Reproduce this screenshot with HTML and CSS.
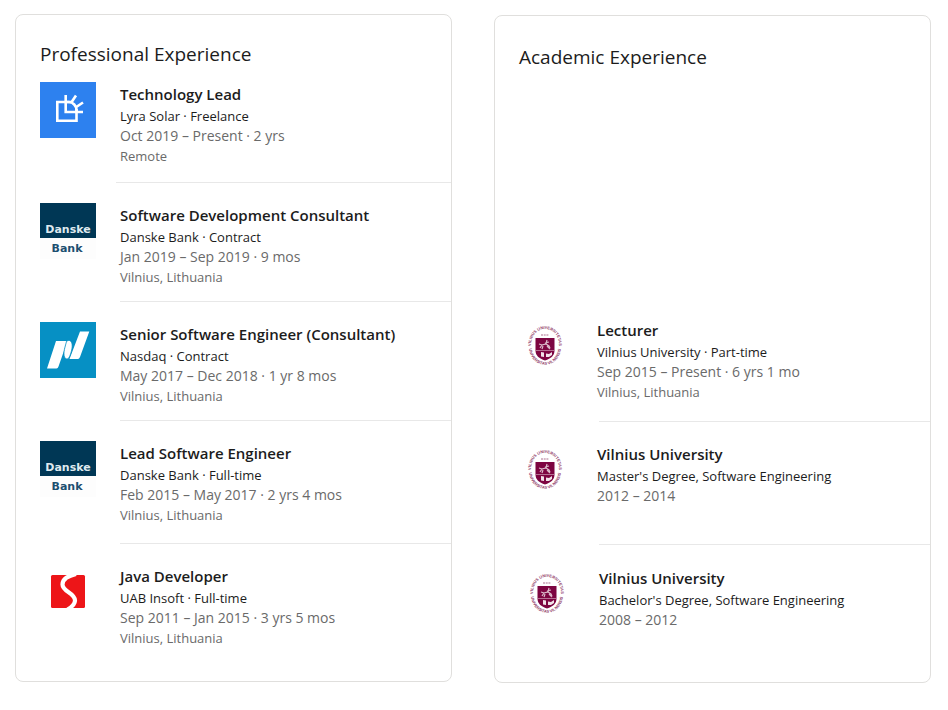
FILE: index.html
```html
<!DOCTYPE html>
<html lang="en">
<head>
<meta charset="utf-8">
<meta name="viewport" content="width=device-width, initial-scale=1">
<title>Experience</title>
<link rel="stylesheet" href="styles.css">
</head>
<body>
<svg class="defs" aria-hidden="true">
  <symbol id="danske" viewBox="0 0 56 56">
    <path fill="#fdfdfd" d="M0 0h56v56H0z"/>
    <path fill="#003755" d="M0 0h56v35H0z"/>
    <text class="danske-text" x="28" y="30" fill="#dfe9ef">Danske</text>
    <text class="danske-text" x="27" y="49" fill="#1d4f70">Bank</text>
  </symbol>
  <symbol id="vilnius" viewBox="0 0 56 56">
    <path id="ring-top" fill="none" d="M12.600 31A14 15.600 0 1 1 39.400 31"/>
    <path id="ring-bottom" fill="none" d="M10 29A16 17.800 0 0 0 42 29"/>
    <text class="ring-text"><textPath href="#ring-top" startOffset="50%">VILNIUS UNIVERSITETAS</textPath></text>
    <text class="ring-text"><textPath href="#ring-bottom" startOffset="50%">UNIVERSITAS VILNENSIS</textPath></text>
    <path stroke="#c9a0b5" stroke-width="1.4" stroke-dasharray="2 .7" d="M22 17h8"/>
    <path fill="#7d0541" d="M16.500 20h19v12.500c0 5-3.500 8-9.500 10-6-2-9.500-5-9.500-10z"/>
    <path stroke="#c48aa6" stroke-width=".8" d="M16.500 32.500h19"/>
    <path fill="none" stroke="#dcbccb" stroke-width="1.200" d="M21 30l2-3 4-1 3 2 1 2M23 27l-3-1M27 26l1-4M30 24l-4 1M24 28l-1 3M28 28l3 3"/>
    <path fill="#f1e2e9" d="M22 34l3 .5v4.500l-3-.5zM27 35.500l3 .5 3-2v3l-3 2h-3z"/>
  </symbol>
</svg>
<main class="page">
  <section class="card">
    <h2 class="card__title">Professional Experience</h2>
    <ul class="list">
      <li class="entry entry--first">
        <svg class="logo" viewBox="0 0 56 56" role="img" aria-label="Lyra Solar">
          <path fill="#2d81ef" d="M0 0h56v56H0z"/>
          <g fill="none" stroke="#fff" stroke-width="2.600">
            <path d="M31 20H17.300V38.700H36.500V27"/>
            <path d="M25.700 13v17H43"/>
            <path d="M26 20h3c4 0 7.500 4 7.500 8v2M31.300 20.500l4.700-7M35.500 25.500l7.500-5"/>
          </g>
        </svg>
        <div class="body">
          <h3 class="role">Technology Lead</h3>
          <p class="org">Lyra Solar · Freelance</p>
          <p class="meta meta--dates">Oct 2019 – Present · 2 yrs</p>
          <p class="meta">Remote</p>
        </div>
      </li>
      <li class="entry">
        <svg class="logo" role="img" aria-label="Danske Bank"><use href="#danske"/></svg>
        <div class="body">
          <h3 class="role">Software Development Consultant</h3>
          <p class="org">Danske Bank · Contract</p>
          <p class="meta meta--dates">Jan 2019 – Sep 2019 · 9 mos</p>
          <p class="meta">Vilnius, Lithuania</p>
        </div>
      </li>
      <li class="entry">
        <svg class="logo" viewBox="0 0 56 56" role="img" aria-label="Nasdaq">
          <path fill="#0690c4" d="M0 0h56v56H0z"/>
          <path fill="#fff" d="M16 19h9.500c1.500 0 1.500 1 1.200 2L18.500 44.500q-.6 2-2 2H7zM40 9.500h9.300L40 35q-.8 2-2 2h-8.500z"/>
          <path fill="#fff" stroke="#0690c4" stroke-width=".8" d="M26.500 19.500C30 16.500 33.500 20 31.700 28c-1.500 6-3 9-4.700 9-3 0-4-5-2-12z"/>
        </svg>
        <div class="body">
          <h3 class="role">Senior Software Engineer (Consultant)</h3>
          <p class="org">Nasdaq · Contract</p>
          <p class="meta meta--dates">May 2017 – Dec 2018 · 1 yr 8 mos</p>
          <p class="meta">Vilnius, Lithuania</p>
        </div>
      </li>
      <li class="entry entry--roomy">
        <svg class="logo" role="img" aria-label="Danske Bank"><use href="#danske"/></svg>
        <div class="body">
          <h3 class="role">Lead Software Engineer</h3>
          <p class="org">Danske Bank · Full-time</p>
          <p class="meta meta--dates">Feb 2015 – May 2017 · 2 yrs 4 mos</p>
          <p class="meta">Vilnius, Lithuania</p>
        </div>
      </li>
      <li class="entry">
        <svg class="logo" viewBox="0 0 56 56" role="img" aria-label="UAB Insoft">
          <rect x="11" y="11" width="34" height="33" rx="1.500" fill="#ed1518"/>
          <path fill="none" stroke="#fff" stroke-width="4.200" d="M36 10C28 12 22.500 14.500 22.500 20.500c0 7.500 12.500 8 12.500 16 0 4-3 6.500-7.500 9"/>
        </svg>
        <div class="body">
          <h3 class="role">Java Developer</h3>
          <p class="org">UAB Insoft · Full-time</p>
          <p class="meta meta--dates">Sep 2011 – Jan 2015 · 3 yrs 5 mos</p>
          <p class="meta">Vilnius, Lithuania</p>
        </div>
      </li>
    </ul>
  </section>

  <section class="card card--academic">
    <h2 class="card__title">Academic Experience</h2>
    <ul class="list">
      <li class="entry entry--roomy">
        <svg class="logo" role="img" aria-label="Vilnius University"><use href="#vilnius"/></svg>
        <div class="body">
          <h3 class="role">Lecturer</h3>
          <p class="org">Vilnius University · Part-time</p>
          <p class="meta meta--dates">Sep 2015 – Present · 6 yrs 1 mo</p>
          <p class="meta">Vilnius, Lithuania</p>
        </div>
      </li>
      <li class="entry entry--degree">
        <svg class="logo" role="img" aria-label="Vilnius University"><use href="#vilnius"/></svg>
        <div class="body">
          <h3 class="role">Vilnius University</h3>
          <p class="org">Master's Degree, Software Engineering</p>
          <p class="meta meta--dates">2012 – 2014</p>
        </div>
      </li>
      <li class="entry">
        <svg class="logo" role="img" aria-label="Vilnius University"><use href="#vilnius"/></svg>
        <div class="body">
          <h3 class="role">Vilnius University</h3>
          <p class="org">Bachelor's Degree, Software Engineering</p>
          <p class="meta meta--dates">2008 – 2012</p>
        </div>
      </li>
    </ul>
  </section>
</main>
</body>
</html>
```
FILE: styles.css
```css
* { box-sizing: border-box; }

body {
  margin: 0;
  background: #fff;
  color: #1c1c1c;
  font-family: "Segoe UI", "Open Sans", "Noto Sans", sans-serif;
}

h2, h3, p, ul { margin: 0; padding: 0; }

.defs { position: absolute; width: 0; height: 0; }

.page {
  display: grid;
  grid-template-columns: 1fr 1fr;
  gap: 42px;
  align-items: start;
  padding: 14px 17px 27px 15px;
}

.card {
  --gap: 24px;
  --divider-inset: 0px;
  padding: 25px 0 33px 24px;
  border: 1px solid #e0dfdd;
  border-radius: 8px;
}

.card__title {
  margin-bottom: 14px;
  font-size: 19px;
  font-weight: 400;
  line-height: 28px;
}

.list { list-style: none; }

.entry {
  --below: 14px;
  display: flex;
  gap: var(--gap);
}

.entry + .entry { padding-top: 20px; }
.entry--first { --below: 16px; --divider-inset: -4px; }
.entry--roomy { --below: 18px; }

.logo {
  flex: none;
  width: 56px;
  height: 56px;
}

.body {
  flex: 1;
  min-width: 0;
}

.entry:not(:last-child) .body::after {
  content: "";
  display: block;
  height: 1px;
  margin: var(--below) 0 0 var(--divider-inset);
  background: #e8e8e8;
}

.role {
  font-size: 15px;
  font-weight: 600;
  line-height: 24px;
}

.org, .meta {
  font-size: 13px;
  line-height: 20px;
}

.meta { color: #6a6a6a; }
.meta--dates { font-size: 14px; }

.card--academic {
  --gap: 22px;
  --divider-inset: 2px;
  margin-top: 1px;
  padding-top: 27px;
  padding-bottom: 52px;
}

.card--academic .card__title { margin-bottom: 247px; }
.card--academic .entry--roomy { --below: 19px; }
.card--academic .entry--degree { --below: 38px; }
.card--academic .entry:last-child { padding-top: 21px; padding-left: 2px; }

.danske-text {
  font-family: "DejaVu Sans", sans-serif;
  font-size: 11px;
  font-weight: 700;
  text-anchor: middle;
}

.ring-text {
  fill: #8f3a67;
  font-family: "Liberation Sans", sans-serif;
  font-size: 4px;
  font-weight: 700;
  text-anchor: middle;
}
```
